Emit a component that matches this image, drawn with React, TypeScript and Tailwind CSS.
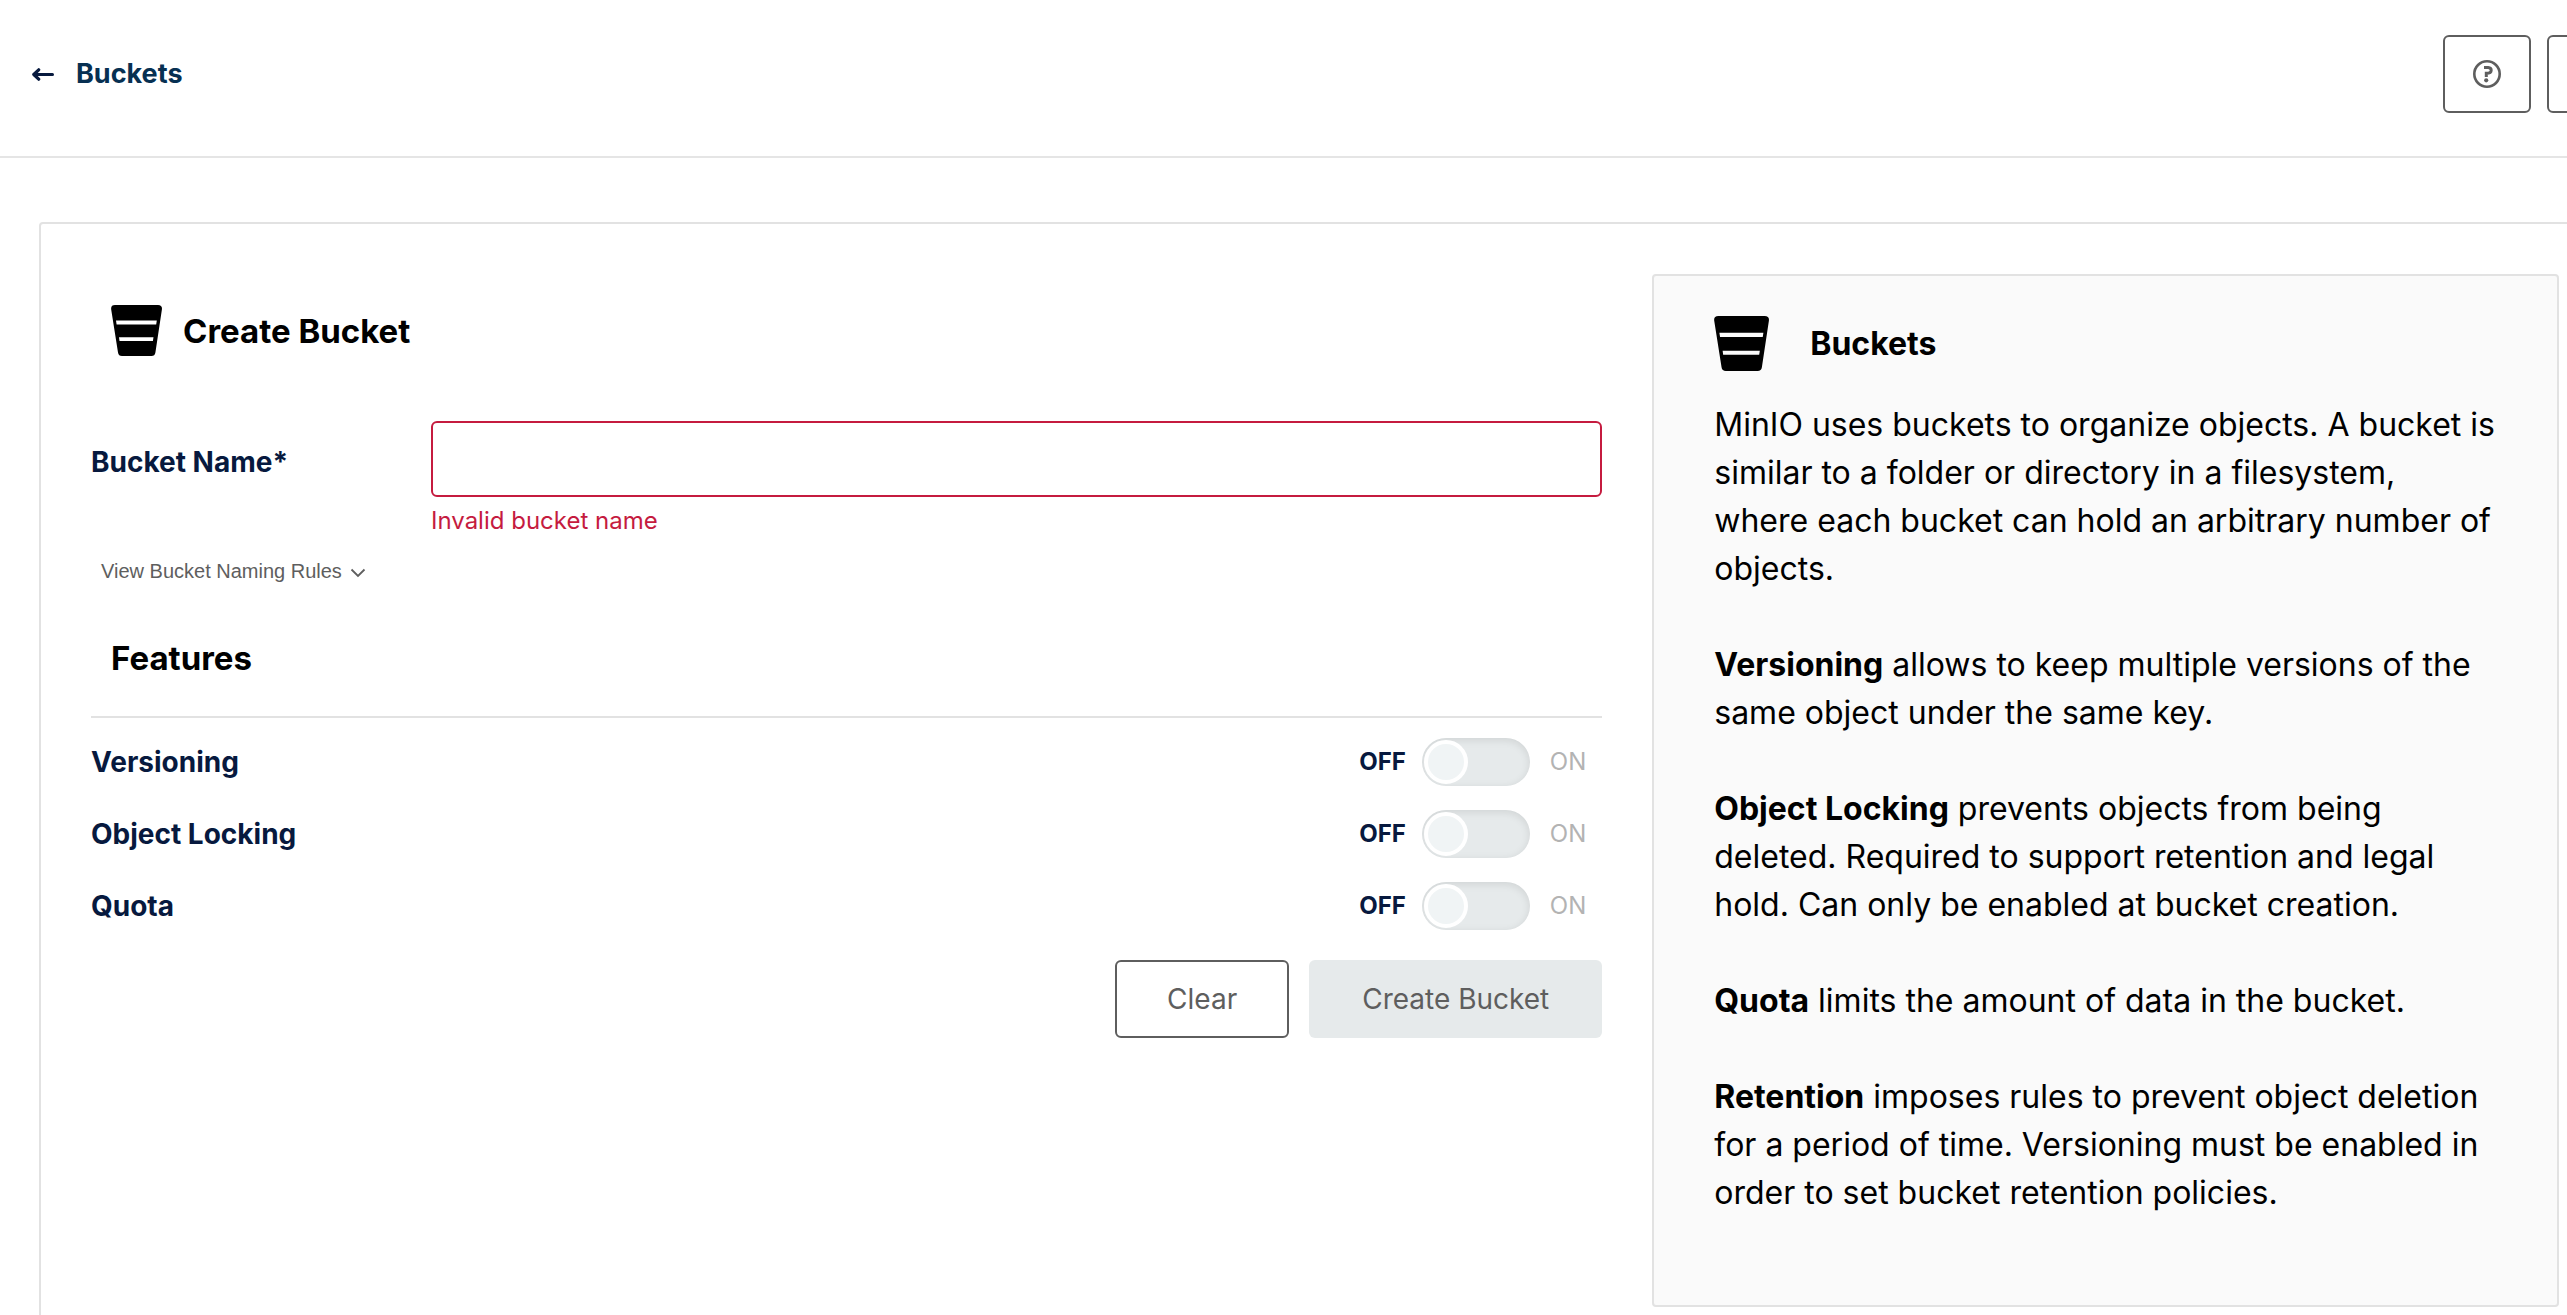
import { useState } from "react";

function BucketIcon({ className }: { className: string }) {
  return (
    <svg viewBox="0 0 51 51" className={className} fill="currentColor" aria-hidden="true">
      <path
        fillRule="evenodd"
        d="M4 0H47Q51.500 0 50.900 4.500L44.400 47.500Q43.900 51 40.400 51H11Q7.500 51 7 47.500L.2 4.500Q-.4 0 4 0ZM5 15.500 5.600 19.500H45.200L45.800 15.500ZM8 32.200 8.500 36H41.900L42.500 32.200Z"
      />
    </svg>
  );
}

function BackArrow() {
  return (
    <svg viewBox="0 0 22 13" className="h-[13px] w-[22px]" fill="none" stroke="currentColor" strokeLinecap="round" strokeLinejoin="round" aria-hidden="true">
      <path d="M3 6.500H20.500" strokeWidth="3" />
      <path d="M6.700 1.800 1.800 6.500 6.700 11.200" strokeWidth="3.200" />
    </svg>
  );
}

function HelpIcon() {
  return (
    <svg viewBox="0 0 28 28" className="size-7" aria-hidden="true">
      <circle cx="14" cy="14" r="12.700" fill="none" stroke="currentColor" strokeWidth="2.600" />
      <path d="M11 7.500H15.200Q18.200 7.700 18.200 10.300Q18.200 13.300 13.300 13.300V17" fill="none" stroke="currentColor" strokeWidth="3" />
      <circle cx="13.200" cy="20.300" r="2.100" fill="currentColor" />
    </svg>
  );
}

const headerButton =
  "flex h-[78px] w-[88px] items-center justify-center rounded-md border-2 border-[#5e5e5e] text-[#5e5e5e]";

function Toggle({ id, label }: { id: string; label: string }) {
  const [on, setOn] = useState(false);
  return (
    <div className="flex h-[72px] items-center justify-between pr-4">
      <label htmlFor={id} className="text-[28px] leading-9 font-bold">
        {label}
      </label>
      <div className="flex items-center text-2xl">
        <span className={on ? "text-[#b3b3b3]" : "font-bold"}>OFF</span>
        <input
          id={id}
          type="checkbox"
          role="switch"
          checked={on}
          onChange={(e) => setOn(e.target.checked)}
          className="mr-5 ml-4 flex h-12 w-[108px] appearance-none items-center rounded-full bg-[#e6eaeb] px-0.5 shadow-[inset_0_2px_8px_rgba(0,0,0,0.1)] before:size-11 before:rounded-full before:border-4 before:border-white before:bg-[#f0f4f5] checked:justify-end checked:bg-[#4ccb92]"
        />
        <span className={on ? "font-bold" : "text-[#b3b3b3]"}>ON</span>
      </div>
    </div>
  );
}

function HelpPanel() {
  return (
    <aside className="rounded border-2 border-[#e2e2e2] bg-[#fafafa] px-15 pt-10 pb-[88px] text-[32px] leading-12 text-black">
      <div className="mb-[30px] flex items-center gap-[41px]">
        <BucketIcon className="size-[55px]" />
        <h2 className="font-bold">Buckets</h2>
      </div>
      <div className="flex flex-col gap-12">
        <p>
          MinIO uses buckets to organize objects. A bucket is similar to a folder or directory in a filesystem, where
          each bucket can hold an arbitrary number of objects.
        </p>
        <p>
          <b>Versioning</b> allows to keep multiple versions of the same object under the same key.
        </p>
        <p>
          <b>Object Locking</b> prevents objects from being deleted. Required to support retention and legal hold. Can
          only be enabled at bucket creation.
        </p>
        <p>
          <b>Quota</b> limits the amount of data in the bucket.
        </p>
        <p>
          <b>Retention</b> imposes rules to prevent object deletion for a period of time. Versioning must be enabled in
          order to set bucket retention policies.
        </p>
      </div>
    </aside>
  );
}

export default function App() {
  const [name, setName] = useState("");
  return (
    <div className="h-screen overflow-hidden bg-white font-['Inter',sans-serif] text-[#07193e]">
      <div className="-mr-[84px]">
        <header className="flex items-center justify-between border-b-2 border-[#e5e5e5] pt-[35px] pr-4 pb-[43px] pl-8">
          <a href="#buckets" className="flex items-center gap-[22px] text-[27px] leading-9 font-bold">
            <BackArrow />
            <span className="text-[#073052]">Buckets</span>
          </a>
          <div className="flex gap-4">
            <button type="button" aria-label="Help" className={headerButton}>
              <HelpIcon />
            </button>
            <button type="button" aria-label="Theme" className={headerButton} />
          </div>
        </header>

        <main className="mt-16 mr-10 ml-[39px] grid grid-cols-[5fr_3fr] gap-[50px] rounded border-2 border-[#e2e2e2] p-[50px]">
          <form onSubmit={(e) => e.preventDefault()}>
            <div className="mt-[31px] ml-5 flex items-center gap-[21px] text-black">
              <BucketIcon className="size-[51px]" />
              <h1 className="text-[33px] leading-10 font-bold">Create Bucket</h1>
            </div>

            <div className="mt-[65px] flex items-start">
              <label htmlFor="bucket-name" className="mt-[23px] w-[340px] shrink-0 text-[28px] leading-9 font-bold">
                Bucket Name*
              </label>
              <div className="flex-1">
                <input
                  id="bucket-name"
                  value={name}
                  onChange={(e) => setName(e.target.value)}
                  aria-invalid="true"
                  aria-describedby="bucket-name-error"
                  className="block h-[76px] w-full rounded-md border-2 border-[#c51b3f] px-4 text-[28px] outline-none"
                />
                <p id="bucket-name-error" className="mt-2 text-2xl text-[#c51b3f]">
                  Invalid bucket name
                </p>
              </div>
            </div>

            <button
              type="button"
              className="mt-[18px] ml-2.5 flex items-center gap-2 font-['Liberation_Sans',sans-serif] text-xl leading-8 text-[#5e5e5e]"
            >
              View Bucket Naming Rules
              <svg viewBox="0 0 16 10" className="mt-1 h-2.5 w-4" fill="none" stroke="currentColor" strokeWidth="1.800" aria-hidden="true">
                <path d="M1.500 1.500 8 8 14.500 1.500" />
              </svg>
            </button>

            <h2 className="mt-[51px] ml-5 text-[33px] leading-10 font-bold text-black">Features</h2>
            <div className="mt-[38px] border-t-2 border-[#e2e2e2] pt-2">
              <Toggle id="versioning" label="Versioning" />
              <Toggle id="locking" label="Object Locking" />
              <Toggle id="quota" label="Quota" />
            </div>

            <div className="mt-[18px] flex justify-end gap-5 text-[28px] text-[#5e5e5e]">
              <button type="button" onClick={() => setName("")} className="h-[78px] rounded-md border-2 border-[#5e5e5e] px-[50px]">
                Clear
              </button>
              <button type="submit" disabled className="h-[78px] rounded-md bg-[#e6eaeb] px-[53px]">
                Create Bucket
              </button>
            </div>
          </form>
          <HelpPanel />
        </main>
      </div>
    </div>
  );
}
